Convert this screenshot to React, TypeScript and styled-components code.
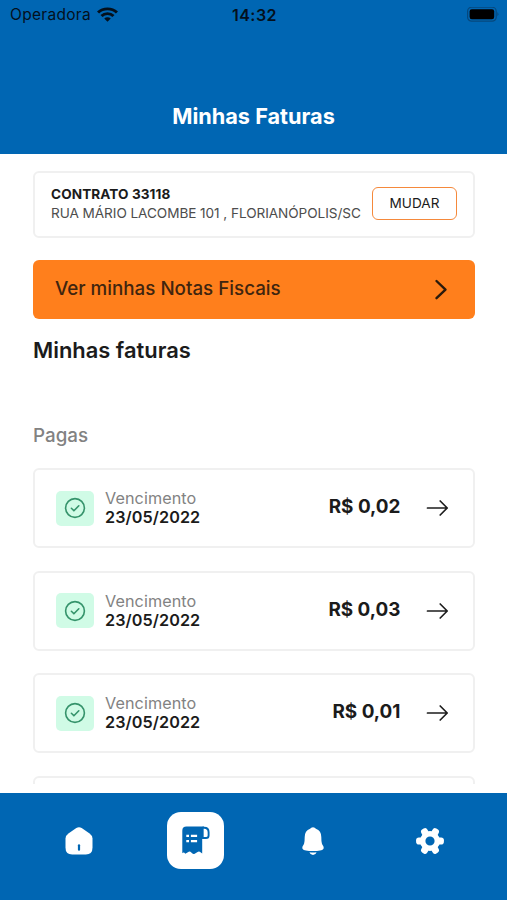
import React from "react";
import styled, { createGlobalStyle } from "styled-components";

const BLUE = "#0066b3";

const GlobalStyle = createGlobalStyle`
  * { box-sizing: border-box; }
  body { margin: 0; background: #fff; font-family: Inter, sans-serif; color: #1b1b1b; }
  svg { display: block; flex: none; }
  button { font: inherit; color: inherit; border: 0; padding: 0; margin: 0; background: none; }
`;

const Screen = styled.div`
  width: 507px;
  height: 900px;
  display: flex;
  flex-direction: column;
  overflow: hidden;
  background: #fff;
`;

const Header = styled.header`
  height: 154.4px;
  flex: none;
  background: ${BLUE};
`;

const StatusBar = styled.div`
  height: 30px;
  padding: 0 8px 0 10px;
  display: grid;
  grid-template-columns: 1fr auto 1fr;
  align-items: center;
  color: #04101c;
  font-size: 15.5px;
  line-height: 30px;
`;

const Carrier = styled.div`
  display: flex;
  align-items: center;
  gap: 6px;
  letter-spacing: 0.3px;
`;

const Clock = styled.div`
  font-weight: 600;
  font-size: 16px;
  letter-spacing: 0.5px;
`;

const Battery = styled.div`
  display: flex;
  justify-content: flex-end;
`;

const Title = styled.h1`
  margin: 71px 0 0;
  text-align: center;
  color: #fff;
  font-size: 21.7px;
  line-height: 30px;
  font-weight: 700;
`;

const Content = styled.main`
  height: 629.6px;
  flex: none;
  padding: 16.4px 32.5px 0 33px;
  overflow: hidden;
`;

const Contract = styled.section`
  height: 67.4px;
  padding: 0 15.5px 2px 16px;
  border: 2px solid #f0f0f0;
  border-radius: 6px;
  display: flex;
  align-items: center;
  justify-content: space-between;
`;

const ContractName = styled.div`
  font-size: 13.6px;
  line-height: 19px;
  letter-spacing: 0.08px;
  font-weight: 680;
  white-space: nowrap;
`;

const Address = styled.div`
  font-size: 13.6px;
  line-height: 18px;
  letter-spacing: -0.06px;
  color: #4d4d4d;
  white-space: nowrap;
`;

const ChangeButton = styled.button`
  width: 85px;
  height: 33px;
  border: 1.5px solid #f5893b;
  border-radius: 6px;
  font-size: 13.6px;
  line-height: 28px;
  padding-bottom: 1px;
`;

const InvoiceLink = styled.button`
  width: 100%;
  height: 59.5px;
  margin-top: 21.6px;
  padding: 0 27px 0 22px;
  border-radius: 6px;
  background: #ff7f1c;
  color: #40250f;
  display: flex;
  align-items: center;
  justify-content: space-between;
  font-size: 18.8px;
  font-weight: 450;
`;

const LinkLabel = styled.span`
  padding-bottom: 3px;
`;

const SectionTitle = styled.h2`
  margin: 17px 0 0;
  font-size: 21.9px;
  line-height: 28px;
  font-weight: 640;
`;

const GroupTitle = styled.h3`
  margin: 57.8px 0 18.1px;
  font-size: 18.8px;
  line-height: 28px;
  font-weight: 500;
  color: #828282;
`;

const List = styled.div`
  display: flex;
  flex-direction: column;
  gap: 22.5px;
`;

const Invoice = styled.article`
  height: 80px;
  flex: none;
  padding: 0 24px 0 21px;
  border: 2px solid #f0f0f0;
  border-radius: 6px;
  display: flex;
  align-items: center;
`;

const PaidBadge = styled.div`
  width: 38px;
  height: 35px;
  border-radius: 5px;
  background: #d0fbe6;
  display: flex;
  align-items: center;
  justify-content: center;
`;

const Due = styled.div`
  margin-left: 11px;
  flex: 1;
  font-size: 16.2px;
  line-height: 19px;
`;

const DueLabel = styled.div`
  color: #828282;
  font-weight: 440;
  letter-spacing: 0.08px;
`;

const DueDate = styled.div`
  font-weight: 620;
  letter-spacing: 0.08px;
`;

const Amount = styled.div`
  margin-right: 25px;
  font-size: 18.9px;
  line-height: 26px;
  padding-bottom: 2px;
  font-weight: 670;
`;

const TabBar = styled.nav`
  height: 107.5px;
  margin-top: auto;
  flex: none;
  padding: 19.8px 20px 0;
  background: ${BLUE};
  display: grid;
  grid-template-columns: repeat(4, 117px);
  justify-items: center;
  align-items: start;
`;

const Tab = styled.button<{ $active?: boolean }>`
  width: 57px;
  height: 57px;
  border-radius: 14px;
  background: ${(p) => (p.$active ? "#fff" : "transparent")};
  display: flex;
  align-items: center;
  justify-content: center;
`;

const WifiIcon = () => (
  <svg width="21" height="16" viewBox="0 0 20 16" preserveAspectRatio="none" fill="none" stroke="#04101c" strokeWidth="2.8">
    <path d="M1 5.6a12.8 12.8 0 0 1 18 0" />
    <path d="M4.300 9a8 8 0 0 1 11.400 0" />
    <path d="M10 14.700l-3.100-3.100a4.400 4.400 0 0 1 6.200 0z" fill="#04101c" stroke="none" />
  </svg>
);

const BatteryIcon = () => (
  <svg width="32" height="16" viewBox="0 0 32 16">
    <rect x="0.6" y="0.2" width="28.6" height="14" rx="4" fill="none" stroke="#06487d" strokeWidth="1.2" />
    <rect x="2.6" y="2.2" width="24.6" height="10" rx="2.2" fill="#000" />
    <path d="M30.4 5.100q2 2.100 0 4.200z" fill="#06487d" />
  </svg>
);

const ChevronIcon = () => (
  <svg width="14" height="22" viewBox="0 0 14 22" fill="none" stroke="#2a1a0c" strokeWidth="2.4" strokeLinecap="round" strokeLinejoin="round">
    <path d="M2.500 2l9 8.600-9 8.600" />
  </svg>
);

const CheckIcon = () => (
  <svg width="22" height="22" viewBox="0 0 22 22" fill="none" stroke="#35936b" strokeWidth="1.6" strokeLinecap="round" strokeLinejoin="round">
    <circle cx="11" cy="11" r="9.4" />
    <path d="M7.400 11.300l2.500 2.500 4.900-5" />
  </svg>
);

const ArrowIcon = () => (
  <svg width="23" height="18" viewBox="0 0 23 18" fill="none" stroke="#1d1d1d" strokeWidth="1.7" strokeLinecap="round" strokeLinejoin="round">
    <path d="M1.500 9h19.600M14.200 2l7 7-7 7" />
  </svg>
);

const HomeIcon = () => (
  <svg width="28" height="28" viewBox="0 0 28 28">
    <path
      fill="#fff"
      d="M11.300 1.100q2.700-1.700 5.400 0l7.900 5.300q2.900 2 2.900 5.200v9.200q0 6.700-6.700 6.700H7.200Q.5 27.500.5 20.800V11.600Q.5 8.400 3.400 6.400Z"
    />
    <path d="M14 18.300v4.400" stroke={BLUE} strokeWidth="2.200" strokeLinecap="round" />
  </svg>
);

const ReceiptIcon = () => (
  <svg width="28" height="29" viewBox="0 0 28 29">
    <path
      fill={BLUE}
      d="M4.500 .600H22V12.500H20.200V27.600L17.800 25.800Q16.700 25 15.600 26L12.700 27.700Q10.900 28.700 9.300 26.600Q7.800 24.800 5.900 26.200L3.300 27.800Q1.800 25.800 .300 27.200V4.800Q.300 .600 4.500 .600Z"
    />
    <path
      d="M20.700 12V1.700H22.200Q26.600 1.700 26.600 6.200V9.400Q26.600 12 24 12Z"
      fill="#fff"
      stroke={BLUE}
      strokeWidth="1.900"
      strokeLinejoin="round"
    />
    <path d="M4.300 9.900H7M8.900 9.900H15.100M4.300 15.200H7M8.900 15.200H15.100" stroke="#fff" strokeWidth="2.200" />
  </svg>
);

const BellIcon = () => (
  <svg width="22" height="28" viewBox="0 0 22 28" fill="#fff">
    <path d="M11 .300q2 0 2.900 1.500 5.400 2 5.400 8.200 0 4.800.600 6.400.400 1.200 1.300 2.600.900 1.600.100 3.100-1.300 2-10.300 2T.700 22.100q-.800-1.500.100-3.100.900-1.400 1.300-2.600.600-1.600.600-6.400 0-6.200 5.400-8.200Q9 .300 11 .300z" />
    <path d="M7.400 25.200q3.600.400 7.200 0-1 2.800-3.600 2.800t-3.600-2.800z" />
  </svg>
);

const GearIcon = () => (
  <svg width="28" height="28" viewBox="-14 -14 28 28">
    <circle r="7.300" fill="none" stroke="#fff" strokeWidth="5.400" />
    {[0, 60, 120, 180, 240, 300].map((angle) => (
      <rect key={angle} x="6" y="-3.500" width="7.900" height="7" rx="2.800" fill="#fff" transform={`rotate(${angle})`} />
    ))}
  </svg>
);

const invoices = [
  { date: "23/05/2022", amount: "R$ 0,02" },
  { date: "23/05/2022", amount: "R$ 0,03" },
  { date: "23/05/2022", amount: "R$ 0,01" },
];

export default function App() {
  return (
    <>
      <GlobalStyle />
      <Screen>
        <Header>
          <StatusBar>
            <Carrier>
              Operadora
              <WifiIcon />
            </Carrier>
            <Clock>14:32</Clock>
            <Battery>
              <BatteryIcon />
            </Battery>
          </StatusBar>
          <Title>Minhas Faturas</Title>
        </Header>
        <Content>
          <Contract>
            <div>
              <ContractName>CONTRATO 33118</ContractName>
              <Address>RUA MÁRIO LACOMBE 101 , FLORIANÓPOLIS/SC</Address>
            </div>
            <ChangeButton>MUDAR</ChangeButton>
          </Contract>
          <InvoiceLink>
            <LinkLabel>Ver minhas Notas Fiscais</LinkLabel>
            <ChevronIcon />
          </InvoiceLink>
          <SectionTitle>Minhas faturas</SectionTitle>
          <GroupTitle>Pagas</GroupTitle>
          <List>
            {invoices.map((invoice) => (
              <Invoice key={invoice.amount}>
                <PaidBadge>
                  <CheckIcon />
                </PaidBadge>
                <Due>
                  <DueLabel>Vencimento</DueLabel>
                  <DueDate>{invoice.date}</DueDate>
                </Due>
                <Amount>{invoice.amount}</Amount>
                <ArrowIcon />
              </Invoice>
            ))}
            <Invoice />
          </List>
        </Content>
        <TabBar>
          <Tab aria-label="Início">
            <HomeIcon />
          </Tab>
          <Tab $active aria-label="Faturas">
            <ReceiptIcon />
          </Tab>
          <Tab aria-label="Notificações">
            <BellIcon />
          </Tab>
          <Tab aria-label="Configurações">
            <GearIcon />
          </Tab>
        </TabBar>
      </Screen>
    </>
  );
}
